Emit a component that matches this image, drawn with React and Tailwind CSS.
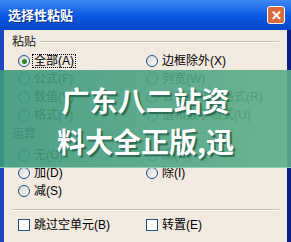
function Radio({ checked }) {
  return (
    <span className="w-[12px] h-[12px] rounded-full border border-[#1c5180] bg-gradient-to-br from-[#d8d6cf] to-white flex items-center justify-center shrink-0">
      {checked && <span className="w-[5px] h-[5px] rounded-full bg-[#2a8a2a]" />}
    </span>
  );
}

function Check() {
  return <span className="w-[12px] h-[12px] border border-[#1c5180] bg-white shrink-0" />;
}

function Option({ label, checked, box }) {
  return (
    <div className="flex items-center h-[18px] gap-[3px]">
      {box ? <Check /> : <Radio checked={checked} />}
      <span className={checked ? "outline outline-1 outline-dotted outline-black px-[1px]" : "px-[1px]"}>{label}</span>
    </div>
  );
}

function Group({ title }) {
  return (
    <div className="flex items-center h-[12px] pl-[8px] pr-[8px] gap-[4px]">
      <span className="text-[#1a1a1a]">{title}</span>
      <div className="flex-1 border-t border-[#c9c2b5] border-b border-b-white" />
    </div>
  );
}

export default function App() {
  return (
    <div
      className="relative w-[291px] h-[242px] overflow-hidden bg-[#f2e9e0] text-[12px] leading-none text-black"
      style={{ fontFamily: '"Liberation Sans", "Noto Sans CJK SC", sans-serif' }}
    >
      {/* title bar */}
      <div className="h-[30px] flex items-center justify-between pl-[8px] pr-[6px] bg-gradient-to-b from-[#3d86f2] via-[#0a5ae6] to-[#0648c8]">
        <span className="text-white font-bold text-[13px] [text-shadow:1px_1px_0_#0a2a80]">选择性粘贴</span>
        <span className="w-[18px] h-[18px] rounded-[3px] border border-white bg-[#d86a3e] flex items-center justify-center text-white font-bold text-[13px]">✕</span>
      </div>

      <div className="flex border-l-[4px] border-l-[#1f45c4] border-r-[4px] border-r-[#0b1e86] h-[212px]">
        <div className="flex-1 flex flex-col pt-[6px]">
          <Group title="粘贴" />
          <div className="grid grid-cols-[128px_1fr] pl-[14px] mt-[4px]">
            <Option label="全部(A)" checked />
            <Option label="边框除外(X)" />
            <Option label="公式(F)" />
            <Option label="列宽(W)" />
            <Option label="数值(V)" />
            <Option label="公式和数字格式(R)" />
            <Option label="格式(T)" />
            <Option label="值和数字格式(U)" />
          </div>
          <div className="mt-[4px]">
            <Group title="运算" />
          </div>
          <div className="grid grid-cols-[128px_1fr] pl-[14px] mt-[6px]">
            <Option label="无(O)" checked={false} />
            <Option label="乘(M)" />
            <Option label="加(D)" />
            <Option label="除(I)" />
            <Option label="减(S)" />
            <div />
          </div>
          <div className="mx-[8px] mt-[9px] border-t border-[#c9c2b5] border-b border-b-white" />
          <div className="grid grid-cols-[128px_1fr] pl-[14px] mt-[5px]">
            <Option label="跳过空单元(B)" box />
            <Option label="转置(E)" box />
          </div>
        </div>
      </div>

      {/* overlay band */}
      <div className="absolute left-0 right-0 top-[70px] h-[98px] bg-gradient-to-r from-[#3c9a7e]/90 to-[#5cad89]/90 border-b border-b-[#8fd0b5] flex flex-col items-center pt-[10px]">
        <div
          className="text-white font-bold text-[28px] leading-[41px] [text-shadow:2px_2px_1px_#2b6b55]"
          style={{ fontFamily: '"Noto Sans CJK SC", sans-serif' }}
        >
          <div className="text-center">广东八二站资</div>
          <div className="text-center">料大全正版,迅</div>
        </div>
      </div>
    </div>
  );
}
